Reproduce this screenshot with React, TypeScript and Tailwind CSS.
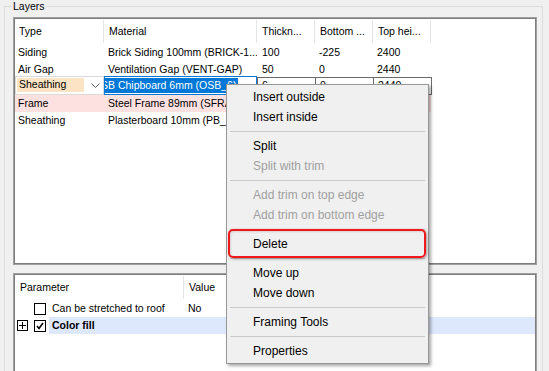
import React from 'react';

type Layer = { type: string; material: string; t: string; b: string; top: string; pink?: boolean; editing?: boolean };

const layers: Layer[] = [
  { type: 'Siding', material: 'Brick Siding 100mm (BRICK-1...', t: '100', b: '-225', top: '2400' },
  { type: 'Air Gap', material: 'Ventilation Gap (VENT-GAP)', t: '50', b: '0', top: '2440' },
  { type: 'Sheathing', material: 'SB Chipboard 6mm (OSB_6)', t: '6', b: '0', top: '2440', editing: true },
  { type: 'Frame', material: 'Steel Frame 89mm (SFRAME-89)', t: '', b: '', top: '', pink: true },
  { type: 'Sheathing', material: 'Plasterboard 10mm (PB_10)', t: '', b: '', top: '' },
];

type MenuEntry = { label?: string; disabled?: boolean; sep?: boolean };

const menu: MenuEntry[] = [
  { label: 'Insert outside' },
  { label: 'Insert inside' },
  { sep: true },
  { label: 'Split' },
  { label: 'Split with trim', disabled: true },
  { sep: true },
  { label: 'Add trim on top edge', disabled: true },
  { label: 'Add trim on bottom edge', disabled: true },
  { sep: true },
  { label: 'Delete' },
  { sep: true },
  { label: 'Move up' },
  { label: 'Move down' },
  { sep: true },
  { label: 'Framing Tools' },
  { sep: true },
  { label: 'Properties' },
];

function HeaderCell({ w, label, pl }: { w: string; label: string; pl: string }) {
  return (
    <div className={`${w} ${pl} h-[23px] mt-[1px] flex items-center border-r border-[#e5e5e5] whitespace-nowrap`}>
      {label}
    </div>
  );
}

function Check({ checked }: { checked?: boolean }) {
  return (
    <div className="w-[12px] h-[12px] border border-black bg-white flex items-center justify-center">
      {checked && (
        <svg width="8" height="8" viewBox="0 0 8 8">
          <path d="M1 4 L3 6.5 L7 1" stroke="black" strokeWidth="1.6" fill="none" />
        </svg>
      )}
    </div>
  );
}

export default function App() {
  return (
    <div className="w-[549px] h-[371px] bg-[#f0f0f0] relative overflow-hidden font-['Liberation_Sans',Arial,sans-serif] text-[10.5px] text-black">
      {/* Layers group */}
      <div className="relative ml-[4px] mt-[6px] w-[539px] h-[400px] border border-[#dcdcdc] pt-[10px] pl-[8px]">
        <div className="absolute left-[7px] top-[-7px] px-[1px] bg-[#f0f0f0] leading-[12px] text-[10.5px]">Layers</div>

        {/* upper list */}
        <div className="w-[524px] h-[248px] border border-[#a0a0a0]">
          <div className="w-full h-full border border-[#7d7d7d] bg-white">
            <div className="flex h-[25px]">
              <HeaderCell w="w-[89px]" pl="pl-[4px]" label="Type" />
              <HeaderCell w="w-[153px]" pl="pl-[5px]" label="Material" />
              <HeaderCell w="w-[58px]" pl="pl-[5px]" label="Thickn..." />
              <HeaderCell w="w-[58px]" pl="pl-[5px]" label="Bottom ..." />
              <HeaderCell w="w-[58px]" pl="pl-[5px]" label="Top hei..." />
            </div>
            {layers.map((l, i) =>
              l.editing ? (
                <div key={i} className="flex items-end h-[17px]">
                  <div className="w-[89px] h-[19px] border border-[#dadada] bg-white flex items-start">
                    <div className="ml-[1px] mt-[1px] w-[67px] h-[14px] bg-[#fbe3c3] pl-[2px] flex items-center">{l.type}</div>
                    <svg className="ml-[7px] mt-[6px]" width="9" height="6" viewBox="0 0 9 6">
                      <path d="M0.5 0.5 L4.5 4.5 L8.5 0.5" stroke="#5a5a5a" strokeWidth="1" fill="none" />
                    </svg>
                  </div>
                  <div className="w-[153px] h-[19px] border border-[#0078d7] bg-white overflow-hidden whitespace-nowrap">
                    <span className="inline-flex items-center h-[15px] mt-[1px] -ml-[4px] bg-[#0078d7] text-white pr-[2px]">{l.material}</span>
                  </div>
                  <div className="flex">
                    {[l.t, l.b, l.top].map((v, j) => (
                      <div key={j} className={`h-[18px] w-[58px] border-y border-l border-[#6a6a6a] ${j === 2 ? 'border-r w-[59px]' : ''} pl-[4px] flex items-center bg-white`}>
                        {v}
                      </div>
                    ))}
                  </div>
                </div>
              ) : (
                <div key={i} className={`flex items-center h-[17px] w-[416px] whitespace-nowrap ${l.pink ? 'bg-[#fde0e0]' : ''}`}>
                  <div className="w-[89px] pl-[3px]">{l.type}</div>
                  <div className="w-[153px] pl-[4px] overflow-hidden">{l.material}</div>
                  <div className="w-[58px] pl-[5px]">{l.t}</div>
                  <div className="w-[58px] pl-[4px]">{l.b}</div>
                  <div className="w-[58px] pl-[4px]">{l.top}</div>
                </div>
              )
            )}
          </div>
        </div>

        {/* lower list: parameters */}
        <div className="mt-[8px] w-[524px] h-[120px] border border-[#a0a0a0]">
          <div className="w-full h-full border border-[#7d7d7d] bg-white">
            <div className="flex h-[25px]">
              <HeaderCell w="w-[169px]" pl="pl-[5px]" label="Parameter" />
              <div className="pl-[5px] h-[23px] mt-[1px] flex items-center">Value</div>
            </div>
            <div className="flex items-center h-[17px] whitespace-nowrap">
              <div className="w-[19px]" />
              <Check />
              <div className="w-[138px] pl-[6px]">Can be stretched to roof</div>
              <div className="pl-[4px]">No</div>
            </div>
            <div className="flex items-center h-[17px] whitespace-nowrap">
              <div className="ml-[2px] w-[11px] h-[11px] border border-black flex items-center justify-center">
                <svg width="7" height="7" viewBox="0 0 7 7">
                  <path d="M0 3.5 H7 M3.5 0 V7" stroke="black" strokeWidth="1" />
                </svg>
              </div>
              <div className="w-[6px]" />
              <Check checked />
              <div className="flex-1 ml-[3px] h-[17px] bg-[#dde8fc] pl-[3px] flex items-center font-bold">Color fill</div>
            </div>
          </div>
        </div>
      </div>

      {/* context menu */}
      <div className="absolute left-[226px] top-[84px] w-[203px] border border-[#979797] bg-[#f0f0f0] py-[2px] text-[12px] shadow-[2px_2px_3px_rgba(0,0,0,0.35)]">
        {menu.map((m, i) =>
          m.sep ? (
            <div key={i} className="h-[9px] pt-[4px] px-[3px]">
              <div className="h-px bg-[#cacaca]" />
            </div>
          ) : (
            <div key={i} className={`h-[20px] flex items-center pl-[26px] ${m.disabled ? 'text-[#a0a0a0]' : 'text-black'}`}>
              {m.label}
            </div>
          )
        )}
      </div>

      {/* red highlight round Delete */}
      <div className="absolute left-[228px] top-[229px] w-[198px] h-[29px] rounded-[5px] border-2 border-[#f01818] shadow-[1px_1px_3px_rgba(0,0,0,0.35),inset_1px_1px_2px_rgba(0,0,0,0.12)]" />
    </div>
  );
}
